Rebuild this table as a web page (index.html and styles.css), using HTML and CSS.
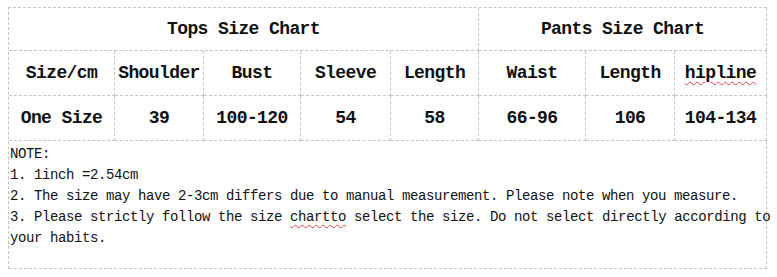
FILE: index.html
```html
<!DOCTYPE html>
<html>
<head>
<meta charset="utf-8">
<link rel="stylesheet" href="styles.css">
</head>
<body>
<div class="chart">
  <div class="cell head span5">Tops Size Chart</div>
  <div class="cell head span3">Pants Size Chart</div>

  <div class="cell head">Size/cm</div>
  <div class="cell head">Shoulder</div>
  <div class="cell head">Bust</div>
  <div class="cell head">Sleeve</div>
  <div class="cell head">Length</div>
  <div class="cell head">Waist</div>
  <div class="cell head">Length</div>
  <div class="cell head"><span class="spell">hipline</span></div>

  <div class="cell head">One Size</div>
  <div class="cell head">39</div>
  <div class="cell head">100-120</div>
  <div class="cell head">54</div>
  <div class="cell head">58</div>
  <div class="cell head">66-96</div>
  <div class="cell head">106</div>
  <div class="cell head">104-134</div>

  <div class="cell note span8">
    <p class="line">NOTE:</p>
    <p class="line">1. 1inch =2.54cm</p>
    <p class="line">2. The size may have 2-3cm differs due to manual measurement. Please note when you measure.</p>
    <p class="line">3. Please strictly follow the size <span class="spell">chartto</span> select the size. Do not select directly according to</p>
    <p class="line">your habits.</p>
  </div>
</div>
</body>
</html>
```
FILE: styles.css
```css
html, body {
  margin: 0;
  padding: 0;
  background: #ffffff;
}

body {
  padding: 7px 0 0 8px;
  font-family: "Liberation Mono", "DejaVu Sans Mono", monospace;
  color: #111111;
}

.chart {
  display: grid;
  grid-template-columns: 106px 89px 97px 90px 88px 107px 89px 92px;
  grid-template-rows: 43px 45px 45px 128px;
  width: 759px;
  box-sizing: border-box;
  border-top: 1px dashed #c4c4c4;
  border-left: 1px dashed #c4c4c4;
}

.cell {
  box-sizing: border-box;
  border-right: 1px dashed #c4c4c4;
  border-bottom: 1px dashed #c4c4c4;
  display: flex;
  align-items: center;
  justify-content: center;
}

.span5 { grid-column: span 5; }
.span3 { grid-column: span 3; }
.span8 { grid-column: span 8; }

.head {
  font-size: 18px;
  font-weight: bold;
  letter-spacing: -0.6px;
  white-space: nowrap;
}

.note {
  display: block;
  padding: 3px 0 0 1px;
  font-size: 14px;
  letter-spacing: -0.4px;
  line-height: 21px;
}

.line {
  margin: 0;
  white-space: nowrap;
}

.spell {
  text-decoration: underline wavy #e04848;
  text-decoration-thickness: 1px;
  text-underline-offset: 3px;
}
```
